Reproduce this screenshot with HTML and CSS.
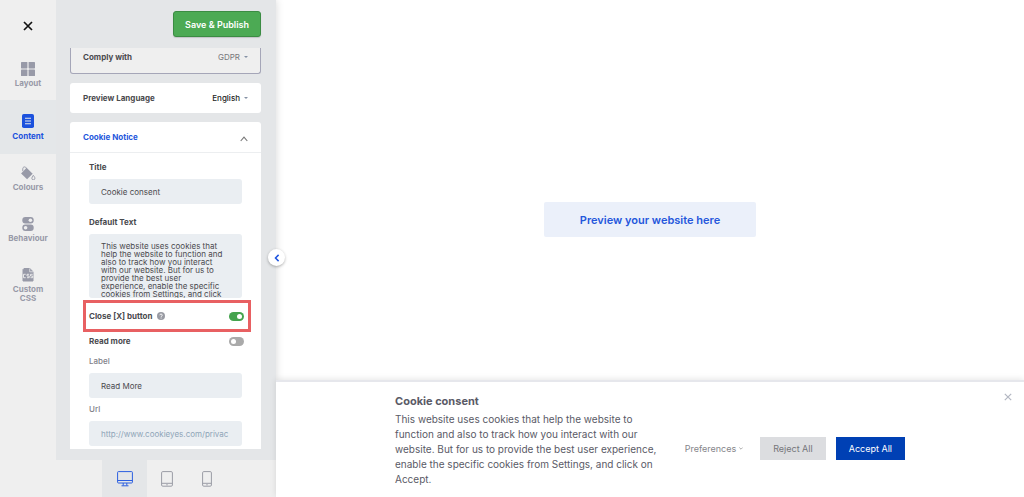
FILE: index.html
```html
<!DOCTYPE html>
<html lang="en">
<head>
<meta charset="utf-8">
<title>Cookie banner editor</title>
<link rel="stylesheet" href="styles.css">
</head>
<body>
<div class="app">
  <aside class="editor">
    <div class="editor-main">
      <nav class="nav">
        <button class="close" type="button" aria-label="Close editor">
          <svg width="10" height="10" viewBox="0 0 10 10"><path d="M1 1l8 8M9 1L1 9" stroke="#111" stroke-width="1.7" fill="none"/></svg>
        </button>
        <button class="nav-item" type="button">
          <svg width="14" height="14" viewBox="0 0 14 14" fill="currentColor"><rect width="6.4" height="6.4" rx=".6"/><rect x="7.6" width="6.4" height="6.4" rx=".6"/><rect y="7.6" width="6.4" height="6.4" rx=".6"/><rect x="7.6" y="7.6" width="6.4" height="6.4" rx=".6"/></svg>
          <span>Layout</span>
        </button>
        <button class="nav-item active" type="button">
          <svg width="14" height="14" viewBox="0 0 14 14"><rect x="1" width="12" height="14" rx="1.8" fill="currentColor"/><path d="M4 4.2h6M4 7h6M4 9.800h6" stroke="#e4e7e9" stroke-width="1.1"/></svg>
          <span>Content</span>
        </button>
        <button class="nav-item" type="button">
          <svg width="16" height="14" viewBox="0 0 16 15"><path d="M6.500 2L13 8.300 7 14.200.600 8z" fill="currentColor"/><path d="M6.500 6V3.200C6.300.3 2.400.2 2.400 3v2.500" fill="none" stroke="currentColor" stroke-width="1"/><path d="M13.700 10c1 1.400 1.700 2.200 1.700 3.100a1.600 1.600 0 0 1-3.300 0c0-.9.800-1.700 1.600-3.100z" fill="#efefef" stroke="currentColor" stroke-width="1"/></svg>
          <span>Colours</span>
        </button>
        <button class="nav-item" type="button">
          <svg width="14" height="14" viewBox="0 0 14 14"><rect x="1.300" width="11.400" height="6.500" rx="3" fill="currentColor"/><rect x="1.300" y="7.500" width="11.400" height="6.500" rx="3" fill="currentColor"/><circle cx="9.400" cy="3.250" r="1.800" fill="#efefef"/><circle cx="4.600" cy="10.750" r="1.800" fill="#efefef"/></svg>
          <span>Behaviour</span>
        </button>
        <button class="nav-item" type="button">
          <svg width="14" height="14" viewBox="0 0 14 14"><path d="M3 .5h5.800L12 3.700V13H2V1.500z" fill="currentColor" stroke="currentColor" stroke-linejoin="round"/><path d="M8.700.5v3.300H12" fill="none" stroke="#efefef" stroke-width=".7"/><path d="M4.700 6.300H2.500v3.400h2.200M8.200 6.300H6V8h2.200v1.700H6M11.700 6.300H9.500V8h2.200v1.700H9.500" fill="none" stroke="#efefef" stroke-width=".9"/></svg>
          <span>Custom<br>CSS</span>
        </button>
      </nav>

      <div class="panel">
        <div class="panel-top"><button class="save" type="button">Save &amp; Publish</button></div>
        <div class="scroll">
          <div class="card row comply">
            <span>Comply with</span>
            <button class="pick muted" type="button">GDPR <i class="caret"></i></button>
          </div>
          <div class="card row language">
            <span>Preview Language</span>
            <button class="pick" type="button">English <i class="caret"></i></button>
          </div>
          <section class="card notice">
            <button class="row notice-head" type="button">
              <span>Cookie Notice</span>
              <svg width="8" height="9" viewBox="0 0 8 9"><path d="M.7 8L4 4.200 7.300 8" fill="none" stroke="#777" stroke-width="1.100"/></svg>
            </button>
            <form class="form">
              <label class="title" for="title">Title</label>
              <input class="field" id="title" type="text" value="Cookie consent">
              <label class="title second" for="text">Default Text</label>
              <textarea class="field area" id="text">This website uses cookies that help the website to function and also to track how you interact with our website. But for us to provide the best user experience, enable the specific cookies from Settings, and click on Accept.</textarea>
              <div class="toggle-row highlight">
                <label for="close-button">Close [X] button</label>
                <svg width="8" height="8" viewBox="0 0 8 8"><circle cx="4" cy="4" r="4" fill="#999ba3"/><path d="M2.800 3.200c0-1.600 2.500-1.500 2.500 0 0 .8-1.200.9-1.200 1.700M4.100 5.500v1" fill="none" stroke="#fff" stroke-width=".9"/></svg>
                <input class="switch" id="close-button" type="checkbox" checked>
              </div>
              <div class="toggle-row">
                <label for="read-more">Read more</label>
                <input class="switch" id="read-more" type="checkbox">
              </div>
              <label class="sub" for="label">Label</label>
              <input class="field" id="label" type="text" value="Read More">
              <label class="sub" for="url">Url</label>
              <input class="field" id="url" type="text" placeholder="http://www.cookieyes.com/privac">
            </form>
          </section>
        </div>
      </div>
    </div>
    <div class="devices">
      <button class="device on" type="button" aria-label="Desktop">
        <svg width="16" height="16" viewBox="0 0 16 16" fill="none" stroke="currentColor"><rect x=".6" y=".6" width="14.800" height="11.400" rx=".8"/><path d="M.6 9.500h14.800M6.200 12v2.500M9.800 12v2.500M4.500 14.800h7"/></svg>
      </button>
      <button class="device" type="button" aria-label="Tablet">
        <svg width="12" height="16" viewBox="0 0 12 16" fill="none" stroke="currentColor"><rect x=".6" y=".6" width="10.800" height="14.600" rx="1.200"/><path d="M.6 12.300h10.800M5.300 13.800h1.400"/></svg>
      </button>
      <button class="device" type="button" aria-label="Mobile">
        <svg width="10" height="16" viewBox="0 0 10 16" fill="none" stroke="currentColor"><rect x=".6" y=".6" width="8.800" height="14.600" rx="1.200"/><path d="M.6 12.300h8.800M4.300 13.800h1.400"/></svg>
      </button>
    </div>
    <button class="collapse" type="button" aria-label="Collapse panel">
      <svg width="6" height="8" viewBox="0 0 6 8"><path d="M4.600.9L1.500 4l3.100 3.100" fill="none" stroke="#1f55e0" stroke-width="1.500"/></svg>
    </button>
  </aside>

  <main class="preview">
    <button class="preview-button" type="button">Preview your website here</button>
    <section class="banner">
      <button class="banner-close" type="button" aria-label="Close">
        <svg width="8" height="8" viewBox="0 0 8 8"><path d="M.8.8l6.400 6.400M7.200.8L.8 7.200" stroke="#b3b7c2" stroke-width="1.200" fill="none"/></svg>
      </button>
      <div class="banner-body">
        <div class="banner-copy">
          <h2>Cookie consent</h2>
          <p>This website uses cookies that help the website to function and also to track how you interact with our website. But for us to provide the best user experience, enable the specific cookies from Settings, and click on Accept.</p>
        </div>
        <div class="banner-actions">
          <button class="prefs" type="button">Preferences <svg width="4" height="3" viewBox="0 0 4 3"><path d="M.3.5L2 2.200 3.700.5" fill="none" stroke="#999" stroke-width=".8"/></svg></button>
          <button class="reject" type="button">Reject All</button>
          <button class="accept" type="button">Accept All</button>
        </div>
      </div>
    </section>
  </main>
</div>
</body>
</html>
```
FILE: styles.css
```css
* { box-sizing: border-box; }
body { margin: 0; font-family: Inter, sans-serif; font-size: 8px; color: #4a4a4e; background: #fff; }
button, input, textarea { font: inherit; color: inherit; }
button { border: 0; padding: 0; background: none; cursor: pointer; }
svg { display: block; flex: none; }

.app { display: flex; height: 100vh; overflow: hidden; }

.editor { position: relative; z-index: 1; width: 276px; flex: none; display: flex; flex-direction: column; background: #efefef; box-shadow: 0 0 8px rgba(0, 0, 0, .16); }
.editor-main { flex: 1; min-height: 0; display: flex; }

.nav { width: 56px; flex: none; display: flex; flex-direction: column; }
.close { height: 52px; display: grid; place-items: center; }
.nav-item { min-height: 51px; display: flex; flex-direction: column; align-items: center; gap: 3px; padding-top: 12px; color: #989aa8; font-weight: 700; line-height: 9px; }
.close + .nav-item { min-height: 48px; padding-top: 10px; }
.nav-item.active { min-height: 54px; padding-top: 14px; gap: 4px; color: #1b51dd; background: #e4e7e9; }

.panel { flex: 1; min-width: 0; display: flex; flex-direction: column; padding: 0 15px 11px 14px; background: #e4e6e8; }
.panel-top { height: 48px; flex: none; display: flex; justify-content: flex-end; align-items: center; }
.save { height: 26px; padding: 0 11px; border: 1px solid #3b8c43; border-radius: 3px; background: #4caa54; color: #fff; font-size: 9px; font-weight: 600; box-shadow: 0 1px 1px rgba(0, 0, 0, .15); }
.scroll { flex: 1; min-height: 0; display: flex; flex-direction: column; gap: 9px; overflow: hidden; }

.card { flex: none; border-radius: 3px; background: #fff; }
.row { display: flex; align-items: center; justify-content: space-between; padding: 0 13px; font-weight: 700; }
.comply { height: 26px; padding: 0 12px 7px; border: 1px solid #a5a6b8; border-top: 0; border-radius: 0 0 3px 3px; background: #efefef; }
.language { height: 30px; }
.pick { display: flex; align-items: center; gap: 4px; font-weight: 500; color: #222; }
.pick.muted { font-weight: 400; color: #77777c; }
.caret { border: 2px solid transparent; border-top-color: #8592a5; border-bottom: 0; }

.notice-head { width: 100%; height: 31px; border-bottom: 1px solid #eceef0; color: #2457dc; }
.form { display: flex; flex-direction: column; padding: 8px 19px; }
.title { font-weight: 700; line-height: 12px; margin-bottom: 6px; }
.title.second { margin-top: 12px; }
.field { width: 100%; height: 25px; padding: 0 12px; border: 0; border-radius: 3px; outline: 0; background: #eaeef2; }
.field::placeholder { color: #8fa5b8; opacity: 1; }
.area { display: block; height: 64px; padding: 8px 16px 0 12px; line-height: 8px; resize: none; overflow: hidden; }
.toggle-row { display: flex; align-items: center; gap: 5px; height: 18px; font-weight: 700; }
.toggle-row.highlight { height: 32px; margin: 2px -9px 0 -6px; padding: 0 6px 0 3px; border: 3px solid #e86062; }
.switch { appearance: none; width: 15px; height: 9px; margin: 0 -2px 0 auto; padding: 2px; border-radius: 5px; background: #aaa; display: flex; }
.switch::before { content: ""; width: 5px; height: 5px; border-radius: 50%; background: #fff; }
.switch:checked { justify-content: flex-end; background: #45a34e; }
.sub { margin: 5px 0 6px; line-height: 12px; font-weight: 500; color: #808088; }

.devices { height: 37px; flex: none; display: flex; justify-content: center; padding-left: 53px; }
.device { width: 40px; display: grid; place-items: center; color: #9a9ca5; }
.device.on { width: 45px; color: #2b5ee0; background: #e4e6e8; }
.collapse { position: absolute; top: 249px; right: -9px; width: 17px; height: 17px; display: grid; place-items: center; border-radius: 50%; background: #fff; box-shadow: 0 1px 3px rgba(0, 0, 0, .3); }

.preview { position: relative; z-index: 2; flex: 1; min-width: 0; display: flex; flex-direction: column; pointer-events: none; }
.preview > * { pointer-events: auto; }
.preview-button { margin: 202px auto 0; padding: 0 36px; height: 35px; border-radius: 2px; background: #ebf0fa; color: #2457dc; font-size: 11px; font-weight: 600; }
.banner { position: relative; margin-top: auto; padding: 12px 119px 10px; border-top: 2px solid #e6e7ec; background: #fff; box-shadow: 0 -1px 6px rgba(0, 0, 0, .1); color: #5a5a66; }
.banner-close { position: absolute; top: 11px; right: 12px; }
.banner-body { display: flex; align-items: center; justify-content: space-between; }
.banner-copy { width: 268px; }
.banner h2 { margin: 0; font-size: 11px; font-weight: 700; line-height: 15px; }
.banner p { margin: 3px 0 0; font-size: 10px; line-height: 15px; }
.banner-actions { display: flex; align-items: center; font-size: 9px; margin-top: 16px; }
.prefs { display: flex; align-items: center; gap: 3px; margin-right: 17px; color: #85858a; }
.reject, .accept { height: 23px; padding: 0 12px; }
.reject { margin-right: 10px; border: 1px solid #dcdde0; background: #dcdde0; color: #75757a; }
.accept { border: 1px solid #0040b4; background: #0040b4; color: #fff; }
```
